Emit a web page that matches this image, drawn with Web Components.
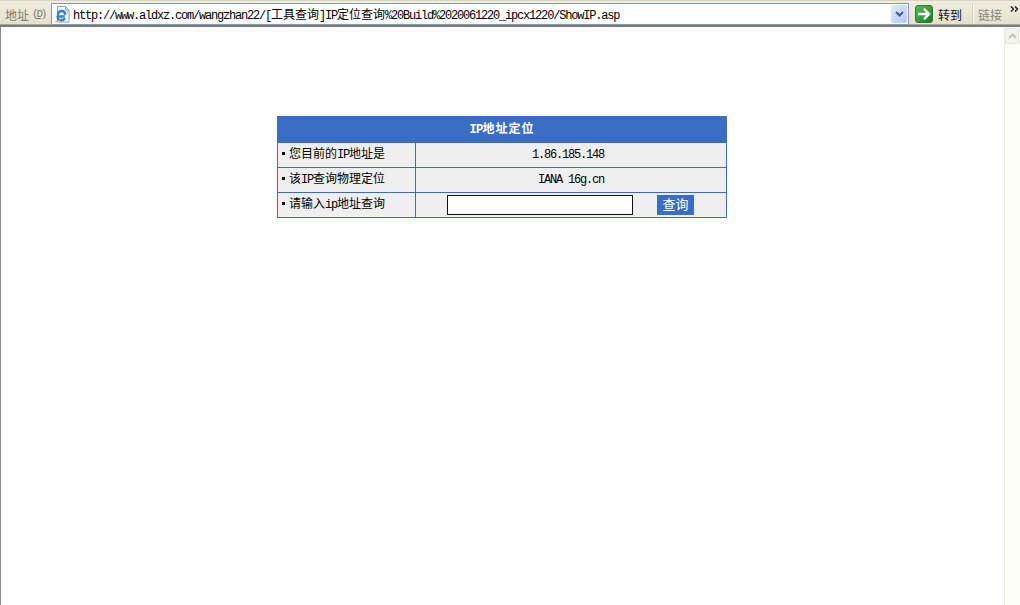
<!DOCTYPE html>
<html lang="zh"><head><meta charset="utf-8"><title>ShowIP</title>
<style>
html,body{margin:0;height:100%;overflow:hidden;background:#fff}
body{display:flex;flex-direction:column;width:1020px;height:605px;font:12px "Noto Sans CJK SC",sans-serif;color:#000}
</style></head><body>
<ie-addressbar url="http://www.aldxz.com/wangzhan22/[工具查询]IP定位查询%20Build%2020061220_ipcx1220/ShowIP.asp"></ie-addressbar>
<ie-viewport>
  <ip-panel title-text="IP地址定位">
    <ip-row label="您目前的IP地址是"><sim-text text="1.86.185.148&#160;"></sim-text></ip-row>
    <ip-row label="该IP查询物理定位"><sim-text text="IANA 16g.cn"></sim-text></ip-row>
    <ip-row label="请输入ip地址查询" last><ip-query></ip-query></ip-row>
  </ip-panel>
</ie-viewport>
<script>
/* SimSun-like mixed text: Latin runs are 6px-per-char, CJK runs 12px-per-char */
class SimText extends HTMLElement{
  connectedCallback(){
    if(this.shadowRoot)return;
    const r=this.attachShadow({mode:'open'});
    const st=document.createElement('style');
    st.textContent=`:host{display:inline-block;white-space:pre;line-height:14px;padding-bottom:2px}
      .l{font-family:"Liberation Mono",monospace;font-size:12px;letter-spacing:-1.2px}
      .c{font-family:"Noto Sans CJK SC",sans-serif;font-size:12px;font-weight:400}
      :host([bold]) .c{font-weight:700;letter-spacing:1px}
      :host([bold]) .l{font-weight:700;letter-spacing:-.6px}`;
    r.append(st);
    for(const part of (this.getAttribute('text')||'').match(/[\u3000-\u9fff]+|[^\u3000-\u9fff]+/g)||[]){
      const s=document.createElement('span');
      s.className=/[\u3000-\u9fff]/.test(part)?'c':'l';
      s.textContent=part;r.append(s);
    }
  }
}
customElements.define('sim-text',SimText);

class IeAddressbar extends HTMLElement{
  connectedCallback(){
    const r=this.attachShadow({mode:'open'});
    r.innerHTML=`<style>
      :host{display:flex;flex:none;height:27px;box-sizing:border-box;align-items:flex-start;
        background:linear-gradient(#f1eee1,#ece9d8 40%,#e4e0cd);border-bottom:2px solid #7c7c78;
        box-shadow:inset 0 -1px 0 #a9a89f,inset 0 1px 0 #d9d4bf;padding-top:3px;color:#7d7c73}
      .lab{width:51px;flex:none;height:22px;display:flex;align-items:center;padding-left:5px;box-sizing:border-box;font-size:12px;gap:3px;white-space:nowrap}
      .lab b{font:400 11px "Liberation Mono",monospace;letter-spacing:-2.2px}
      .lab u{text-decoration:underline}
      .box{flex:none;width:858px;height:22px;box-sizing:border-box;background:#fff;border:1px solid #7f9db9;display:flex;align-items:center;padding-left:2px;color:#000}
      .box svg{flex:none;margin-right:2px}
      .url{flex:1;min-width:0;padding:1px 0 0}
      .drop{flex:none;width:16px;height:18px;margin-right:1px;border-radius:2px;background:linear-gradient(135deg,#e2ebfd,#b3c9f5);display:flex;align-items:center;justify-content:center}
      .drop svg{margin:0}
      .go{flex:none;margin-left:6px;display:flex;align-items:center;gap:5px;height:22px;width:58px;color:#111;font-size:12px}
      .sep{flex:none;width:1px;height:20px;margin-top:1px;background:#fbfaf3;box-shadow:-1px 0 0 #cfccba}
      .links{flex:none;width:31px;height:22px;padding-left:4px;box-sizing:border-box;display:flex;align-items:center;font-size:12px;color:#87867c}
      .more{flex:none;margin-left:5px;margin-top:3px}
    </style>
    <div class="lab"><span>地址</span><b>(<u>D</u>)</b></div>
    <div class="box">
      <svg width="17" height="17" viewBox="0 0 17 17">
        <path d="M3.500.5h8l3.500 3.500v12h-11.500z" fill="#f7fafe" stroke="#8aa0bf"/>
        <path d="M11.500.5v3.500h3.500" fill="#cfdcee" stroke="#8aa0bf"/>
        <path d="M10.800 10.500h-7.300M3.800 9c.4-2.600 2-4 3.900-4s3.400 1.500 3.400 4.100M11 12.200c-.7 1.300-1.900 2.100-3.400 2.100-2.300 0-4.200-1.900-4.200-4.500" fill="none" stroke="#2a7fd6" stroke-width="2.300"/>
        <path d="M1 15.500c.3 1 3.800-.6 7.500-3.700S14.300 5.500 13.300 5" fill="none" stroke="#d8a24a" stroke-width="1"/>
      </svg>
      <sim-text class="url" text="${this.getAttribute('url')}"></sim-text>
      <div class="drop"><svg width="9" height="7" viewBox="0 0 9 7"><path d="M1 1l3.500 3.500L8 1" fill="none" stroke="#3d5c9a" stroke-width="2"/></svg></div>
    </div>
    <div class="go">
      <svg width="18" height="18" viewBox="0 0 18 18"><defs><linearGradient id="g" x1="0" y1="0" x2="1" y2="1"><stop offset="0" stop-color="#5cc05a"/><stop offset="1" stop-color="#127a1e"/></linearGradient></defs>
        <rect x=".5" y=".5" width="17" height="17" rx="2.500" fill="url(#g)" stroke="#2f7d33"/><path d="M3 9h10M9 3.800L14 9l-5 5.200" fill="none" stroke="#fff" stroke-width="2.400"/></svg>
      <span>转到</span>
    </div>
    <div class="sep"></div>
    <div class="links">链接</div>
    <svg class="more" width="9" height="7" viewBox="0 0 9 7"><path d="M1 .5l2.500 2.500L1 5.500M5 .5l2.500 2.500L5 5.500" fill="none" stroke="#111" stroke-width="1.300"/></svg>`;
  }
}
customElements.define('ie-addressbar',IeAddressbar);

class IeViewport extends HTMLElement{
  connectedCallback(){
    const r=this.attachShadow({mode:'open'});
    r.innerHTML=`<style>
      :host{display:flex;flex:1;min-height:0;border-left:1px solid #8a8a86;background:#fff}
      main{flex:1;min-width:0;display:flex;flex-direction:column;align-items:center;padding:89px 1px 0 0}
      aside{flex:none;width:15px;border-left:1px solid #ebebe6;background:#fdfdf8;padding:1px 0 0 0;display:flex;flex-direction:column}
      .up{width:14px;height:16px;box-sizing:border-box;border:1px solid #e6e6dd;border-radius:2px;background:#f3f3ea;display:flex;align-items:center;justify-content:center}
    </style><main><slot></slot></main>
    <aside><div class="up"><svg width="9" height="6" viewBox="0 0 9 6"><path d="M1 5l3.500-3.500L8 5" fill="none" stroke="#c5c5bd" stroke-width="2"/></svg></div></aside>`;
  }
}
customElements.define('ie-viewport',IeViewport);

class IpPanel extends HTMLElement{
  connectedCallback(){
    const r=this.attachShadow({mode:'open'});
    r.innerHTML=`<style>
      :host{display:block;width:450px;box-sizing:border-box;border:solid #3a6cc0;border-width:0 1px 1px 1px}
      header{height:27px;background:#3a6ec5;margin:0 -1px;color:#fff;display:flex;align-items:center;justify-content:center}
    </style><header><sim-text bold text="${this.getAttribute('title-text')}"></sim-text></header><slot></slot>`;
  }
}
customElements.define('ip-panel',IpPanel);

class IpRow extends HTMLElement{
  connectedCallback(){
    const r=this.attachShadow({mode:'open'});
    r.innerHTML=`<style>
      :host{display:grid;grid-template-columns:138px 1fr;height:25px;box-sizing:border-box;background:#efefef;border-bottom:1px solid #3a6cc0}
      :host([last]){border-bottom:0;height:24px}
      .k{border-right:1px solid #3a6cc0;display:flex;align-items:center;padding-left:4px;gap:5px}
      .k i{width:3px;height:3px;background:#111;flex:none;margin:0 0 4px}
      .k sim-text{margin-left:-1px}
      .v{display:flex;align-items:center;justify-content:center}
    </style><div class="k"><i></i><sim-text text="${this.getAttribute('label')}"></sim-text></div><div class="v"><slot></slot></div>`;
  }
}
customElements.define('ip-row',IpRow);

class IpQuery extends HTMLElement{
  connectedCallback(){
    const r=this.attachShadow({mode:'open'});
    r.innerHTML=`<style>
      :host{display:flex;align-items:center;gap:24px;margin-right:1px}
      input{width:186px;height:20px;box-sizing:border-box;border:1px solid #111;padding:0;margin:0;background:#fff;outline:0}
      button{width:37px;height:20px;box-sizing:border-box;border:0;padding:0 0 2px;margin:0;background:#3a6ec5;color:#fff;font:400 13px "Noto Sans CJK SC",sans-serif;line-height:18px}
    </style><input type="text"><button type="button">查询</button>`;
  }
}
customElements.define('ip-query',IpQuery);
</script>
</body></html>
